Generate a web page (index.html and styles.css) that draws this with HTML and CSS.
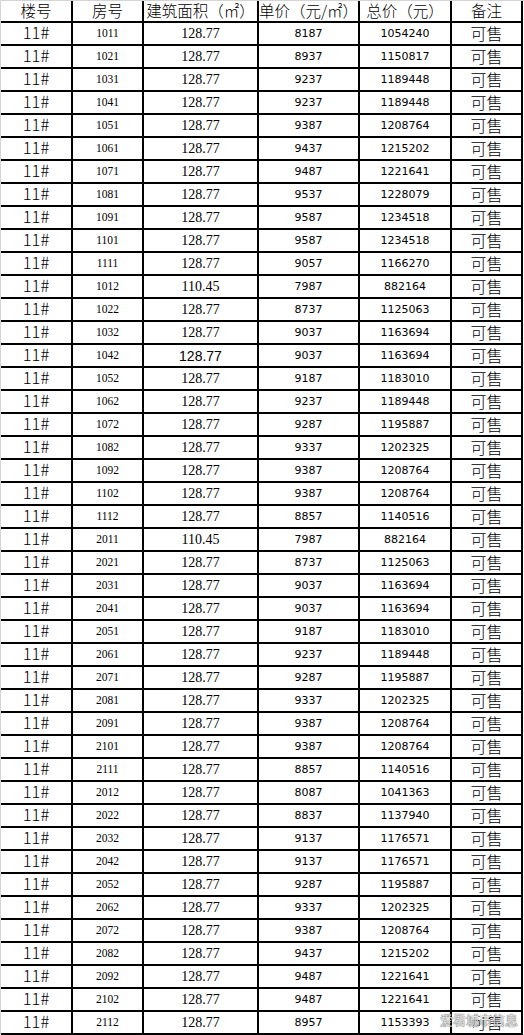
FILE: index.html
```html
<!DOCTYPE html>
<html lang="zh">
<head>
<meta charset="utf-8">
<title>11# 价格表</title>
<link rel="stylesheet" href="styles.css">
</head>
<body>
<div class="sheet">
  <div class="table">
    <div class="row head"><div class="c h">楼号</div><div class="c h">房号</div><div class="c h">建筑面积（㎡）</div><div class="c h">单价（元/㎡）</div><div class="c h">总价（元）</div><div class="c h">备注</div></div>
    <div class="row"><div class="c b">11#</div><div class="c r">1011</div><div class="c a">128.77</div><div class="c p">8187</div><div class="c p">1054240</div><div class="c n">可售</div></div>
    <div class="row"><div class="c b">11#</div><div class="c r">1021</div><div class="c a">128.77</div><div class="c p">8937</div><div class="c p">1150817</div><div class="c n">可售</div></div>
    <div class="row"><div class="c b">11#</div><div class="c r">1031</div><div class="c a">128.77</div><div class="c p">9237</div><div class="c p">1189448</div><div class="c n">可售</div></div>
    <div class="row"><div class="c b">11#</div><div class="c r">1041</div><div class="c a">128.77</div><div class="c p">9237</div><div class="c p">1189448</div><div class="c n">可售</div></div>
    <div class="row"><div class="c b">11#</div><div class="c r">1051</div><div class="c a">128.77</div><div class="c p">9387</div><div class="c p">1208764</div><div class="c n">可售</div></div>
    <div class="row"><div class="c b">11#</div><div class="c r">1061</div><div class="c a">128.77</div><div class="c p">9437</div><div class="c p">1215202</div><div class="c n">可售</div></div>
    <div class="row"><div class="c b">11#</div><div class="c r">1071</div><div class="c a">128.77</div><div class="c p">9487</div><div class="c p">1221641</div><div class="c n">可售</div></div>
    <div class="row"><div class="c b">11#</div><div class="c r">1081</div><div class="c a">128.77</div><div class="c p">9537</div><div class="c p">1228079</div><div class="c n">可售</div></div>
    <div class="row"><div class="c b">11#</div><div class="c r">1091</div><div class="c a">128.77</div><div class="c p">9587</div><div class="c p">1234518</div><div class="c n">可售</div></div>
    <div class="row"><div class="c b">11#</div><div class="c r">1101</div><div class="c a">128.77</div><div class="c p">9587</div><div class="c p">1234518</div><div class="c n">可售</div></div>
    <div class="row"><div class="c b">11#</div><div class="c r">1111</div><div class="c a">128.77</div><div class="c p">9057</div><div class="c p">1166270</div><div class="c n">可售</div></div>
    <div class="row"><div class="c b">11#</div><div class="c r">1012</div><div class="c a">110.45</div><div class="c p">7987</div><div class="c p">882164</div><div class="c n">可售</div></div>
    <div class="row"><div class="c b">11#</div><div class="c r">1022</div><div class="c a">128.77</div><div class="c p">8737</div><div class="c p">1125063</div><div class="c n">可售</div></div>
    <div class="row"><div class="c b">11#</div><div class="c r">1032</div><div class="c a">128.77</div><div class="c p">9037</div><div class="c p">1163694</div><div class="c n">可售</div></div>
    <div class="row"><div class="c b">11#</div><div class="c r">1042</div><div class="c a alt">128.77</div><div class="c p">9037</div><div class="c p">1163694</div><div class="c n">可售</div></div>
    <div class="row"><div class="c b">11#</div><div class="c r">1052</div><div class="c a">128.77</div><div class="c p">9187</div><div class="c p">1183010</div><div class="c n">可售</div></div>
    <div class="row"><div class="c b">11#</div><div class="c r">1062</div><div class="c a">128.77</div><div class="c p">9237</div><div class="c p">1189448</div><div class="c n">可售</div></div>
    <div class="row"><div class="c b">11#</div><div class="c r">1072</div><div class="c a">128.77</div><div class="c p">9287</div><div class="c p">1195887</div><div class="c n">可售</div></div>
    <div class="row"><div class="c b">11#</div><div class="c r">1082</div><div class="c a">128.77</div><div class="c p">9337</div><div class="c p">1202325</div><div class="c n">可售</div></div>
    <div class="row"><div class="c b">11#</div><div class="c r">1092</div><div class="c a">128.77</div><div class="c p">9387</div><div class="c p">1208764</div><div class="c n">可售</div></div>
    <div class="row"><div class="c b">11#</div><div class="c r">1102</div><div class="c a">128.77</div><div class="c p">9387</div><div class="c p">1208764</div><div class="c n">可售</div></div>
    <div class="row"><div class="c b">11#</div><div class="c r">1112</div><div class="c a">128.77</div><div class="c p">8857</div><div class="c p">1140516</div><div class="c n">可售</div></div>
    <div class="row"><div class="c b">11#</div><div class="c r">2011</div><div class="c a">110.45</div><div class="c p">7987</div><div class="c p">882164</div><div class="c n">可售</div></div>
    <div class="row"><div class="c b">11#</div><div class="c r">2021</div><div class="c a">128.77</div><div class="c p">8737</div><div class="c p">1125063</div><div class="c n">可售</div></div>
    <div class="row"><div class="c b">11#</div><div class="c r">2031</div><div class="c a">128.77</div><div class="c p">9037</div><div class="c p">1163694</div><div class="c n">可售</div></div>
    <div class="row"><div class="c b">11#</div><div class="c r">2041</div><div class="c a">128.77</div><div class="c p">9037</div><div class="c p">1163694</div><div class="c n">可售</div></div>
    <div class="row"><div class="c b">11#</div><div class="c r">2051</div><div class="c a">128.77</div><div class="c p">9187</div><div class="c p">1183010</div><div class="c n">可售</div></div>
    <div class="row"><div class="c b">11#</div><div class="c r">2061</div><div class="c a">128.77</div><div class="c p">9237</div><div class="c p">1189448</div><div class="c n">可售</div></div>
    <div class="row"><div class="c b">11#</div><div class="c r">2071</div><div class="c a">128.77</div><div class="c p">9287</div><div class="c p">1195887</div><div class="c n">可售</div></div>
    <div class="row"><div class="c b">11#</div><div class="c r">2081</div><div class="c a">128.77</div><div class="c p">9337</div><div class="c p">1202325</div><div class="c n">可售</div></div>
    <div class="row"><div class="c b">11#</div><div class="c r">2091</div><div class="c a">128.77</div><div class="c p">9387</div><div class="c p">1208764</div><div class="c n">可售</div></div>
    <div class="row"><div class="c b">11#</div><div class="c r">2101</div><div class="c a">128.77</div><div class="c p">9387</div><div class="c p">1208764</div><div class="c n">可售</div></div>
    <div class="row"><div class="c b">11#</div><div class="c r">2111</div><div class="c a">128.77</div><div class="c p">8857</div><div class="c p">1140516</div><div class="c n">可售</div></div>
    <div class="row"><div class="c b">11#</div><div class="c r">2012</div><div class="c a">128.77</div><div class="c p">8087</div><div class="c p">1041363</div><div class="c n">可售</div></div>
    <div class="row"><div class="c b">11#</div><div class="c r">2022</div><div class="c a">128.77</div><div class="c p">8837</div><div class="c p">1137940</div><div class="c n">可售</div></div>
    <div class="row"><div class="c b">11#</div><div class="c r">2032</div><div class="c a">128.77</div><div class="c p">9137</div><div class="c p">1176571</div><div class="c n">可售</div></div>
    <div class="row"><div class="c b">11#</div><div class="c r">2042</div><div class="c a">128.77</div><div class="c p">9137</div><div class="c p">1176571</div><div class="c n">可售</div></div>
    <div class="row"><div class="c b">11#</div><div class="c r">2052</div><div class="c a">128.77</div><div class="c p">9287</div><div class="c p">1195887</div><div class="c n">可售</div></div>
    <div class="row"><div class="c b">11#</div><div class="c r">2062</div><div class="c a">128.77</div><div class="c p">9337</div><div class="c p">1202325</div><div class="c n">可售</div></div>
    <div class="row"><div class="c b">11#</div><div class="c r">2072</div><div class="c a">128.77</div><div class="c p">9387</div><div class="c p">1208764</div><div class="c n">可售</div></div>
    <div class="row"><div class="c b">11#</div><div class="c r">2082</div><div class="c a">128.77</div><div class="c p">9437</div><div class="c p">1215202</div><div class="c n">可售</div></div>
    <div class="row"><div class="c b">11#</div><div class="c r">2092</div><div class="c a">128.77</div><div class="c p">9487</div><div class="c p">1221641</div><div class="c n">可售</div></div>
    <div class="row"><div class="c b">11#</div><div class="c r">2102</div><div class="c a">128.77</div><div class="c p">9487</div><div class="c p">1221641</div><div class="c n">可售</div></div>
    <div class="row"><div class="c b">11#</div><div class="c r">2112</div><div class="c a">128.77</div><div class="c p">8957</div><div class="c p">1153393</div><div class="c n">可售</div></div>
  </div>
  <div class="watermark">爱看城市信息</div>
</div>
</body>
</html>
```

FILE: styles.css
```css
html, body {
  margin: 0;
  padding: 0;
  background: #fff;
}

.sheet {
  position: relative;
  width: 524px;
  height: 1035px;
  box-sizing: border-box;
  border-top: 1px solid #d4d4d4;
  border-left: 1px solid #d4d4d4;
  overflow: hidden;
}

.table {
  display: flex;
  flex-direction: column;
  row-gap: 2px;
  width: 522px;
  background: #000;
  padding: 0 2px 2px 0;
  box-sizing: border-box;
}

.row {
  display: grid;
  grid-template-columns: 70px 69px 113px 99px 90px 69px;
  column-gap: 2px;
  height: 21px;
}

.row.head {
  height: 20px;
}

.c {
  background: #fff;
  color: #000;
  display: flex;
  align-items: center;
  justify-content: center;
  white-space: nowrap;
  overflow: visible;
  line-height: 1;
}

.h {
  font-family: "Noto Sans CJK SC", "Noto Sans", sans-serif;
  font-weight: 300;
  font-size: 15.5px;
}

.b {
  font-family: "Noto Sans CJK SC", "Noto Sans", sans-serif;
  font-weight: 300;
  font-size: 16.5px;
  padding-bottom: 3px;
  box-sizing: border-box;
}

.r {
  font-family: "Liberation Serif", "Times New Roman", serif;
  font-size: 11.5px;
}

.a {
  font-family: "Liberation Serif", "Times New Roman", serif;
  font-size: 14px;
}

.a.alt {
  font-family: "Liberation Sans", Arial, sans-serif;
  font-size: 14px;
}

.p {
  font-family: "DejaVu Sans", Verdana, sans-serif;
  font-size: 11px;
}

.n {
  font-family: "Noto Sans CJK SC", sans-serif;
  font-weight: 300;
  font-size: 16px;
  padding-bottom: 1px;
  box-sizing: border-box;
}

.watermark {
  position: absolute;
  right: 6px;
  bottom: 6px;
  font-family: "Noto Sans CJK SC", sans-serif;
  font-size: 13px;
  color: rgba(255, 255, 255, 0.85);
  text-shadow: 0 0 1px #555, 0 0 1px #555;
}
```
